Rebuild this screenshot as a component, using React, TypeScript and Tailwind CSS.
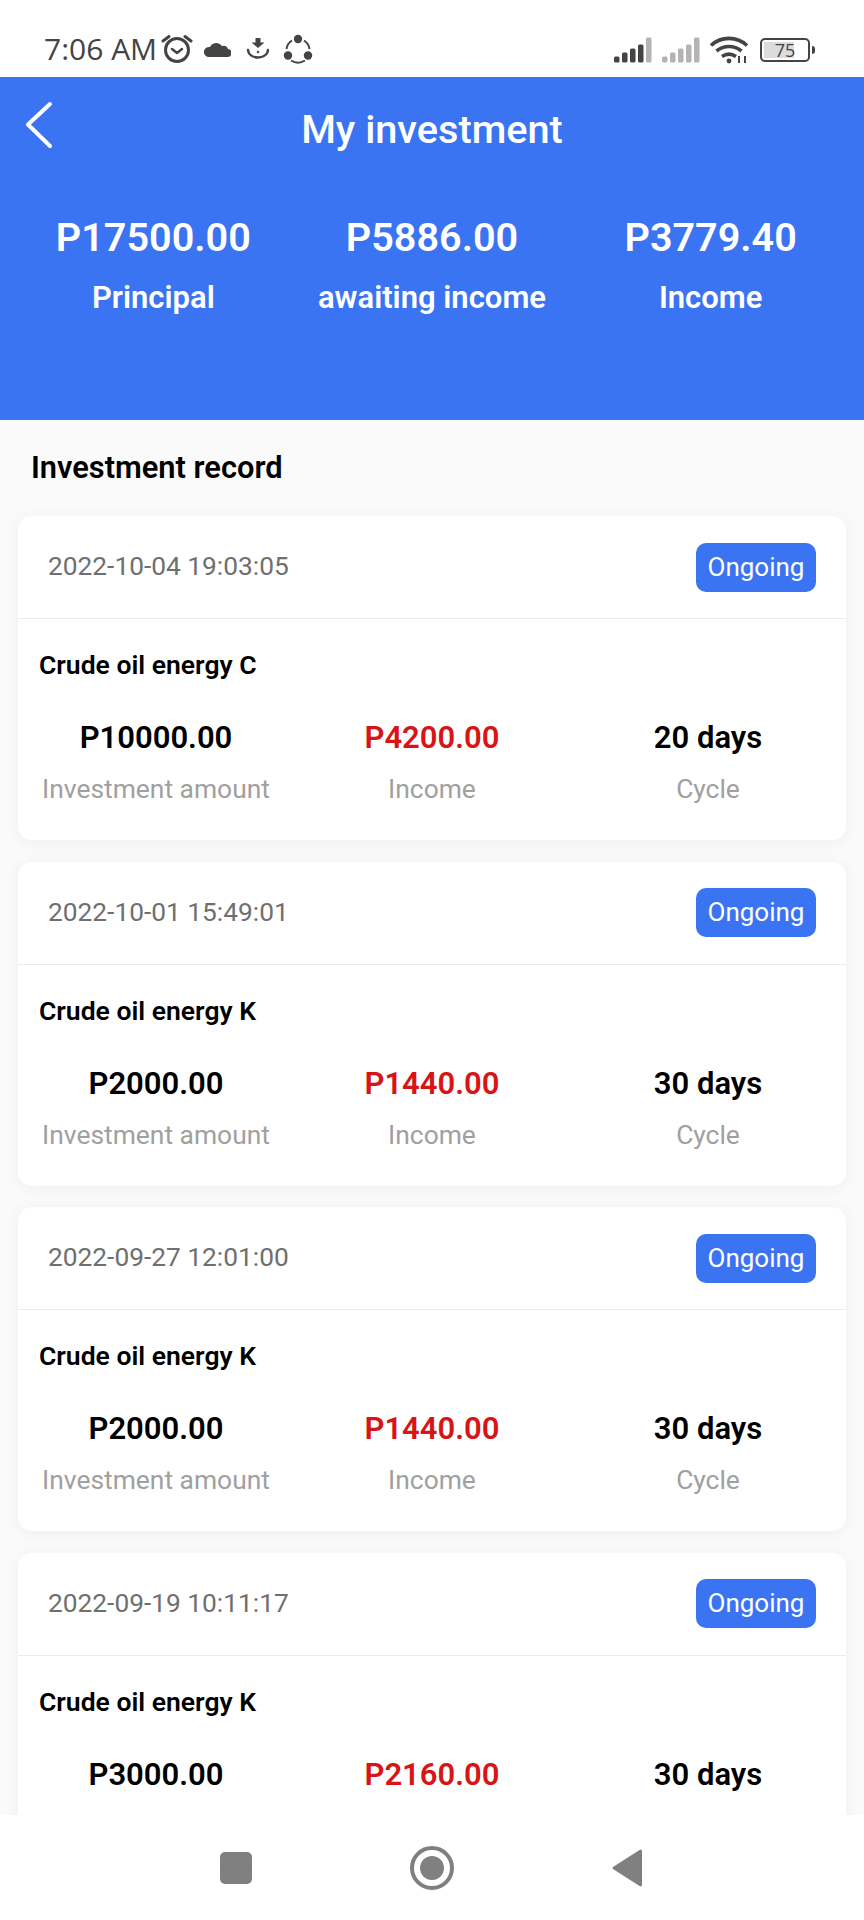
const records = [
  { date: '2022-10-04 19:03:05', name: 'Crude oil energy C', amount: 'P10000.00', income: 'P4200.00', cycle: '20 days' },
  { date: '2022-10-01 15:49:01', name: 'Crude oil energy K', amount: 'P2000.00', income: 'P1440.00', cycle: '30 days' },
  { date: '2022-09-27 12:01:00', name: 'Crude oil energy K', amount: 'P2000.00', income: 'P1440.00', cycle: '30 days' },
  { date: '2022-09-19 10:11:17', name: 'Crude oil energy K', amount: 'P3000.00', income: 'P2160.00', cycle: '30 days' },
];

const summary = [
  { value: 'P17500.00', label: 'Principal' },
  { value: 'P5886.00', label: 'awaiting income' },
  { value: 'P3779.40', label: 'Income' },
];

function SignalBars({ dim }: { dim?: boolean }) {
  const heights = [6, 10, 14, 18, 25];
  return (
    <svg width="38" height="26" viewBox="0 0 38 26">
      {heights.map((h, i) => (
        <rect
          key={i}
          x={i * 8}
          y={25.5 - h}
          width="5.5"
          height={h}
          rx="1.5"
          fill={dim || i === 4 ? '#b4b4b4' : '#444444'}
        />
      ))}
    </svg>
  );
}

function StatusBar() {
  return (
    <div className="flex h-[77px] shrink-0 items-end justify-between bg-white pb-[11px] pl-[44px] pr-[49px]">
      <div className="flex items-center">
        <span className="font-['Open_Sans'] text-[30px] leading-[34px] text-[#444444]">7:06 AM</span>
        {/* alarm */}
        <svg className="ml-[4px]" width="32" height="30" viewBox="0 0 32 30" fill="none" stroke="#444444">
          <circle cx="16" cy="16" r="11.5" strokeWidth="3" />
          <path d="M11 15l5 4 5-4" strokeWidth="2.5" strokeLinecap="round" strokeLinejoin="round" />
          <path d="M2 7l6-4.5M30 7l-6-4.5" strokeWidth="3" strokeLinecap="round" />
        </svg>
        {/* cloud */}
        <svg className="ml-[10px]" width="28" height="18" viewBox="0 0 28 18" fill="#444444">
          <path d="M5 17h19a4 4 0 0 0 1-8 5 5 0 0 0-6-3 7 7 0 0 0-12 1A5 5 0 0 0 5 17z" />
        </svg>
        {/* download */}
        <svg className="ml-[15px]" width="24" height="24" viewBox="0 0 24 24" fill="none">
          <path d="M9.500 1h5v4.500h4L12 11 5.500 5.500h4z" fill="#444444" />
          <circle cx="12" cy="15" r="1.200" fill="#444444" />
          <path d="M2 13c1 10 19 10 20 0" stroke="#444444" strokeWidth="2.400" strokeLinecap="round" />
        </svg>
        {/* share ring */}
        <svg className="ml-[13px]" width="30" height="30" viewBox="0 0 30 30" fill="none">
          <path d="M9 6.500A12 12 0 0 0 3.500 15M21 6.500A12 12 0 0 1 26.500 15M8 26.500a13 13 0 0 0 14 0" stroke="#444444" strokeWidth="2" />
          <circle cx="15" cy="5" r="4.200" fill="#444444" />
          <circle cx="5" cy="21.500" r="4.200" fill="#444444" />
          <circle cx="25" cy="21.500" r="4.200" fill="#444444" />
        </svg>
      </div>
      <div className="flex items-center pb-[2px]">
        <SignalBars />
        <div className="ml-[10px]">
          <SignalBars dim />
        </div>
        {/* wifi */}
        <svg className="ml-[10px]" width="40" height="28" viewBox="0 0 40 28" fill="none" stroke="#444444" strokeWidth="3.600">
          <path d="M1 9.500c10-9.500 26-9.500 36 0M6.500 15c7.500-6 17.500-6 25 0M12 20.500c4.500-3 9.500-3 14 0" />
          <circle cx="19" cy="25" r="2.400" fill="#444444" stroke="none" />
          <path d="M29 20v7M35 20v7" strokeWidth="2" />
        </svg>
        {/* battery */}
        <div className="ml-[10px] flex items-center">
          <div className="relative flex h-[24px] w-[50px] items-center justify-center overflow-hidden rounded-[5px] border-2 border-[#444444]">
            <div className="absolute inset-y-[2px] left-[2px] w-[30px] bg-[#dcdcdc]" />
            <span className="relative font-['Open_Sans'] text-[18px] leading-none text-[#444444]">75</span>
          </div>
          <div className="ml-[2px] h-[8px] w-[3px] rounded-r-sm bg-[#444444]" />
        </div>
      </div>
    </div>
  );
}

function RecordCard({ record }: { record: (typeof records)[number] }) {
  return (
    <div className="shrink-0 overflow-hidden rounded-[14px] bg-white shadow-[0_2px_16px_rgba(0,0,0,0.05)]">
      <div className="flex h-[103px] items-center justify-between border-b border-[#eaeaea] pl-[30px] pr-[30px]">
        <span className="text-[26.3px] text-[#6f6f6f]">{record.date}</span>
        <span className="flex h-[49px] w-[120px] items-center justify-center rounded-[10px] bg-[#3b74f2] text-[26px] text-white">
          Ongoing
        </span>
      </div>
      <div className="h-[221px] pt-[27px]">
        <div className="pl-[21px] text-[26.5px] font-semibold leading-[38px] text-black">{record.name}</div>
        <div className="mt-[34px] grid grid-cols-3 text-center">
          <div>
            <div className="text-[31px] font-semibold leading-[40px] text-black">{record.amount}</div>
            <div className="mt-[11px] text-[26.4px] leading-[40px] text-[#a0a0a0]">Investment amount</div>
          </div>
          <div>
            <div className="text-[31px] font-semibold leading-[40px] text-[#d81414]">{record.income}</div>
            <div className="mt-[11px] text-[26.4px] leading-[40px] text-[#a0a0a0]">Income</div>
          </div>
          <div>
            <div className="text-[31px] font-semibold leading-[40px] text-black">{record.cycle}</div>
            <div className="mt-[11px] text-[26.4px] leading-[40px] text-[#a0a0a0]">Cycle</div>
          </div>
        </div>
      </div>
    </div>
  );
}

export default function App() {
  return (
    <div className="flex h-[1920px] w-[864px] flex-col overflow-hidden bg-white font-['Roboto',sans-serif]">
      <StatusBar />

      {/* Header */}
      <div className="h-[343px] shrink-0 bg-[#3b74f2] text-white">
        <div className="relative flex h-[106px] items-center justify-center">
          <svg
            className="absolute left-[24px] top-[24px]"
            width="30"
            height="48"
            viewBox="0 0 30 48"
            fill="none"
            stroke="#ffffff"
            strokeWidth="4"
            strokeLinecap="round"
            strokeLinejoin="round"
          >
            <path d="M26 3L4 23.500L26 45" />
          </svg>
          <h1 className="text-[39.7px] font-medium">My investment</h1>
        </div>
        <div className="mt-[27px] grid grid-cols-3 px-[14px] text-center">
          {summary.map((s) => (
            <div key={s.label}>
              <div className="text-[39.6px] font-semibold leading-[56px]">{s.value}</div>
              <div className="mt-[12px] text-[31px] font-semibold leading-[40px]">{s.label}</div>
            </div>
          ))}
        </div>
      </div>

      {/* Records */}
      <div className="flex min-h-0 flex-1 flex-col overflow-hidden bg-[#fafafa]">
        <h2 className="flex h-[96px] shrink-0 items-center pl-[31px] text-[30.8px] font-semibold text-black">
          Investment record
        </h2>
        <div className="flex flex-col gap-[21.5px] px-[18px]">
          {records.map((r) => (
            <RecordCard key={r.date} record={r} />
          ))}
        </div>
      </div>

      {/* Nav bar */}
      <div className="flex h-[105px] shrink-0 items-center justify-center gap-[158px] bg-white">
        <div className="h-[32px] w-[32px] rounded-[5px] bg-[#808080]" />
        <div className="flex h-[44px] w-[44px] items-center justify-center rounded-full border-[4px] border-[#808080]">
          <div className="h-[24px] w-[24px] rounded-full bg-[#808080]" />
        </div>
        <svg width="32" height="38" viewBox="0 0 32 38">
          <path d="M30 2v34a1.500 1.500 0 0 1-2.500 1L1 20a1.500 1.500 0 0 1 0-2L27.500 1A1.500 1.500 0 0 1 30 2z" fill="#808080" />
        </svg>
      </div>
    </div>
  );
}
